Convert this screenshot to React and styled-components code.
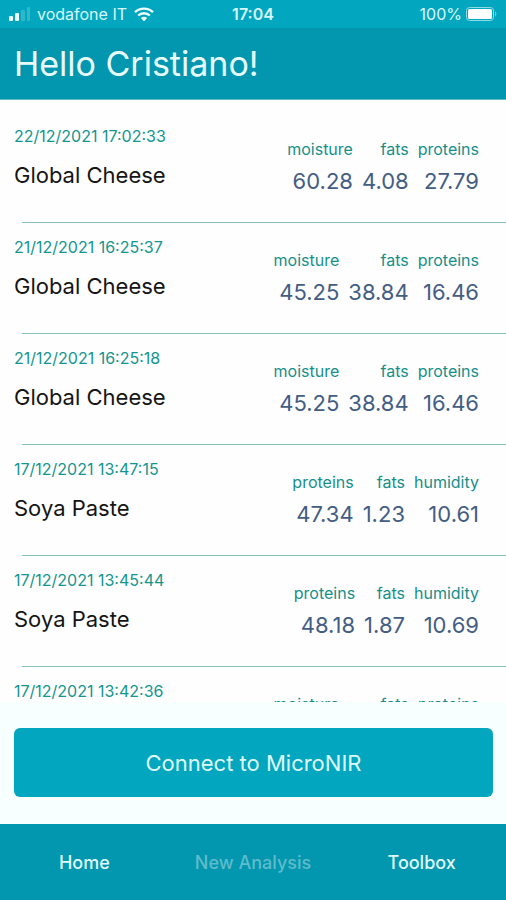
import React, { Component } from "react";
import styled, { createGlobalStyle } from "styled-components";

const GlobalStyle = createGlobalStyle`
  * {
    box-sizing: border-box;
  }
  body {
    margin: 0;
    font-family: Inter, "Liberation Sans", sans-serif;
    background-color: #fdffff;
  }
`;

const Screen = styled.div`
  display: flex;
  flex-direction: column;
  height: 100vh;
`;

const StatusBar = styled.div`
  display: grid;
  grid-template-columns: 1fr auto 1fr;
  align-items: center;
  height: 28px;
  padding: 0 8px;
  font-size: 16px;
  line-height: 28px;
  color: #d5f6fa;
  background-color: #02a7bf;
`;

const StatusGroup = styled.div`
  display: flex;
  align-items: center;
  justify-content: ${props => (props.$end ? "flex-end" : "flex-start")};
  gap: ${props => (props.$end ? "4px" : "7px")};
`;

const Clock = styled.span`
  font-weight: 600;
`;

const Header = styled.header`
  padding: 14px;
  color: #e9fcfd;
  background-color: #0296af;
  border-bottom: 1px solid #5fbccb;
`;

const Title = styled.h1`
  margin: 0;
  font-size: 34px;
  line-height: 43px;
  font-weight: 400;
`;

const List = styled.ul`
  flex: 1;
  min-height: 0;
  margin: 0;
  padding: 12px 0 0;
  list-style: none;
  overflow-y: auto;
  scrollbar-width: none;
  background-color: #fefefe;
`;

const Row = styled.li`
  display: flex;
  justify-content: space-between;
  height: 111px;
  padding: 14px 27px 0 14px;
  background: linear-gradient(#86bfbd, #86bfbd) 22px 100% / 100% 1px no-repeat;
`;

const Stamp = styled.time`
  display: block;
  font-size: 16px;
  line-height: 20px;
  color: #14958f;
`;

const Product = styled.div`
  margin-top: 14px;
  font-size: 22px;
  line-height: 30px;
  color: #151515;
`;

const Readings = styled.dl`
  display: flex;
  gap: 9px;
  margin: 0;
  padding-top: 13px;
  text-align: right;
`;

const Label = styled.dt`
  font-size: 16px;
  line-height: 20px;
  color: #168f8a;
`;

const Value = styled.dd`
  margin: 8px 0 0;
  font-size: 22px;
  line-height: 28px;
  color: #445d83;
`;

const Actions = styled.div`
  padding: 26px 13px 27px 14px;
  background-color: #f7ffff;
`;

const Button = styled.button`
  display: block;
  width: 100%;
  height: 69px;
  border: none;
  border-radius: 6px;
  font: inherit;
  font-size: 22px;
  color: #dffafc;
  cursor: pointer;
  background-color: #02a7bf;
`;

const TabBar = styled.nav`
  display: grid;
  grid-template-columns: repeat(3, 1fr);
  height: 76px;
  background-color: #0296af;
`;

const Tab = styled.a`
  display: flex;
  align-items: center;
  justify-content: center;
  font-size: 18px;
  font-weight: 500;
  text-decoration: none;
  color: ${props => (props.$disabled ? "#5fbccb" : "#dffafc")};
`;

const SignalIcon = () => (
  <svg width="22" height="16" viewBox="0 0 22 16" aria-hidden="true">
    <rect x="1" y="10" width="4" height="5" rx="1" fill="#eefdfe" />
    <rect x="7" y="7" width="4" height="8" rx="1" fill="#eefdfe" />
    <rect x="13" y="4" width="4" height="11" rx="1" fill="#2fb7ca" />
    <rect x="19" y="1" width="3" height="14" rx="1" fill="#2fb7ca" />
  </svg>
);

const WifiIcon = () => (
  <svg width="20" height="15" viewBox="0 0 20 15" fill="none" stroke="#eefdfe" aria-hidden="true">
    <path d="M1 5.2C6 .4 14 .4 19 5.2" strokeWidth="2.4" />
    <path d="M4.2 8.5C7.5 5.4 12.5 5.4 15.8 8.5" strokeWidth="2.4" />
    <path d="M10 14.3L6.8 11.1C8.6 9.4 11.4 9.4 13.2 11.1Z" fill="#eefdfe" stroke="none" />
  </svg>
);

const BatteryIcon = () => (
  <svg width="32" height="16" viewBox="0 0 32 16" aria-hidden="true">
    <rect x=".5" y="1.5" width="27" height="13" rx="3" fill="none" stroke="#8fdbe5" />
    <rect x="2" y="3" width="24" height="10" rx="1.5" fill="#ffffff" />
    <path d="M29 5.5C30.8 6 30.8 10 29 10.5Z" fill="#5fcbd9" />
  </svg>
);

const analyses = [
  { date: "22/12/2021 17:02:33", product: "Global Cheese", readings: [["moisture", "60.28"], ["fats", "4.08"], ["proteins", "27.79"]] },
  { date: "21/12/2021 16:25:37", product: "Global Cheese", readings: [["moisture", "45.25"], ["fats", "38.84"], ["proteins", "16.46"]] },
  { date: "21/12/2021 16:25:18", product: "Global Cheese", readings: [["moisture", "45.25"], ["fats", "38.84"], ["proteins", "16.46"]] },
  { date: "17/12/2021 13:47:15", product: "Soya Paste", readings: [["proteins", "47.34"], ["fats", "1.23"], ["humidity", "10.61"]] },
  { date: "17/12/2021 13:45:44", product: "Soya Paste", readings: [["proteins", "48.18"], ["fats", "1.87"], ["humidity", "10.69"]] },
  { date: "17/12/2021 13:42:36", product: "Global Cheese", readings: [["moisture", "45.25"], ["fats", "38.84"], ["proteins", "16.46"]] }
];

class App extends Component {
  render() {
    return (
      <Screen>
        <GlobalStyle />
        <StatusBar>
          <StatusGroup>
            <SignalIcon />
            <span>vodafone IT</span>
            <WifiIcon />
          </StatusGroup>
          <Clock>17:04</Clock>
          <StatusGroup $end>
            <span>100%</span>
            <BatteryIcon />
          </StatusGroup>
        </StatusBar>
        <Header>
          <Title>Hello Cristiano!</Title>
        </Header>
        <List>
          {analyses.map(item => (
            <Row key={item.date}>
              <div>
                <Stamp>{item.date}</Stamp>
                <Product>{item.product}</Product>
              </div>
              <Readings>
                {item.readings.map(([label, value]) => (
                  <div key={label}>
                    <Label>{label}</Label>
                    <Value>{value}</Value>
                  </div>
                ))}
              </Readings>
            </Row>
          ))}
        </List>
        <Actions>
          <Button type="button">Connect to MicroNIR</Button>
        </Actions>
        <TabBar>
          <Tab href="#home">Home</Tab>
          <Tab href="#new-analysis" $disabled aria-disabled="true">New Analysis</Tab>
          <Tab href="#toolbox">Toolbox</Tab>
        </TabBar>
      </Screen>
    );
  }
}

export default App;
